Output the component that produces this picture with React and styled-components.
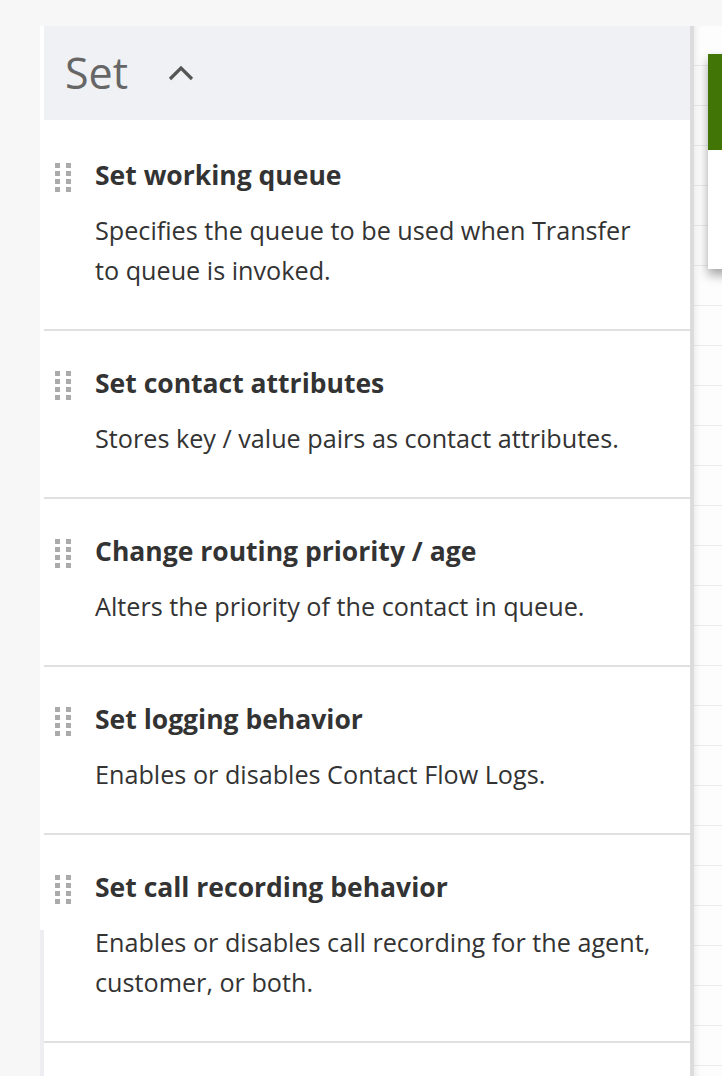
import React from 'react';
import styled, { createGlobalStyle } from 'styled-components';

const GlobalStyle = createGlobalStyle`
  html, body {
    margin: 0;
    padding: 0;
    background: #f7f7f7;
    font-family: "Open Sans", "Liberation Sans", sans-serif;
  }
`;

// whole screen: palette on the left, flow canvas on the right
const Page = styled.div`
  display: flex;
  height: 1076px;
  padding-top: 26px;
  padding-left: 40px;
  box-sizing: border-box;
  overflow: hidden;
`;

const Palette = styled.div`
  width: 654px;
  flex-shrink: 0;
  background:
    linear-gradient(to bottom, #fff 904px, #eeeef2 904px) 0 0 / 4px 100% no-repeat,
    #fff;
  padding-left: 4px;
  box-sizing: border-box;
  border-right: 4px solid #dcdcdc;
`;

const GroupHeader = styled.div`
  height: 94px;
  background: #f0f1f4;
  display: flex;
  align-items: center;
  padding-left: 21px;
  gap: 40px;
`;

const GroupTitle = styled.div`
  font-size: 43px;
  color: #666;
  line-height: 1;
  margin-top: -2px;
`;

const Block = styled.div`
  display: flex;
  gap: 24px;
  padding: ${(p) => (p.$first ? '37px' : '34px')} 10px 39px 11px;
  border-bottom: 2px solid #e0e0e0;
`;

const Handle = styled.div`
  display: grid;
  grid-template-columns: 5px 5px;
  grid-auto-rows: 5px;
  column-gap: 6px;
  row-gap: 3px;
  margin-top: 6px;

  span {
    background: #aaa;
  }
`;

const BlockText = styled.div`
  display: flex;
  flex-direction: column;
  gap: 17px;
  color: #333;
`;

const BlockTitle = styled.div`
  font-size: 26.5px;
  font-weight: 700;
  line-height: 36px;
`;

const BlockDesc = styled.div`
  font-size: 25.2px;
  line-height: 40px;
  max-width: 561px;
`;

const Canvas = styled.div`
  flex: 1;
  position: relative;
  background-color: #fdfdfd;
  background-image: repeating-linear-gradient(
    to bottom,
    transparent 0,
    transparent 39px,
    #ececec 39px,
    #ececec 40px
  );
  box-shadow: inset 6px 0 6px -4px rgba(0, 0, 0, 0.08);
`;

const FlowCard = styled.div`
  position: absolute;
  left: 14px;
  top: 28px;
  width: 200px;
  height: 215px;
  background: #fff;
  box-shadow: 0 6px 10px rgba(0, 0, 0, 0.35);
  border-top: 96px solid #417505;
  box-sizing: border-box;
`;

const Chevron = () => (
  <svg width="26" height="16" viewBox="0 0 26 16">
    <path d="M2 14 L13 3 L24 14" fill="none" stroke="#555" strokeWidth="3.2" />
  </svg>
);

const blocks = [
  {
    title: 'Set working queue',
    desc: 'Specifies the queue to be used when Transfer to queue is invoked.',
  },
  {
    title: 'Set contact attributes',
    desc: 'Stores key / value pairs as contact attributes.',
  },
  {
    title: 'Change routing priority / age',
    desc: 'Alters the priority of the contact in queue.',
  },
  {
    title: 'Set logging behavior',
    desc: 'Enables or disables Contact Flow Logs.',
  },
  {
    title: 'Set call recording behavior',
    desc: 'Enables or disables call recording for the agent, customer, or both.',
  },
];

export default function App() {
  return (
    <>
      <GlobalStyle />
      <Page>
        <Palette>
          <GroupHeader>
            <GroupTitle>Set</GroupTitle>
            <Chevron />
          </GroupHeader>
          {blocks.map((b, i) => (
            <Block key={b.title} $first={i === 0}>
              <Handle>
                {Array.from({ length: 8 }).map((_, k) => (
                  <span key={k} />
                ))}
              </Handle>
              <BlockText>
                <BlockTitle>{b.title}</BlockTitle>
                <BlockDesc>{b.desc}</BlockDesc>
              </BlockText>
            </Block>
          ))}
        </Palette>
        <Canvas>
          <FlowCard />
        </Canvas>
      </Page>
    </>
  );
}
